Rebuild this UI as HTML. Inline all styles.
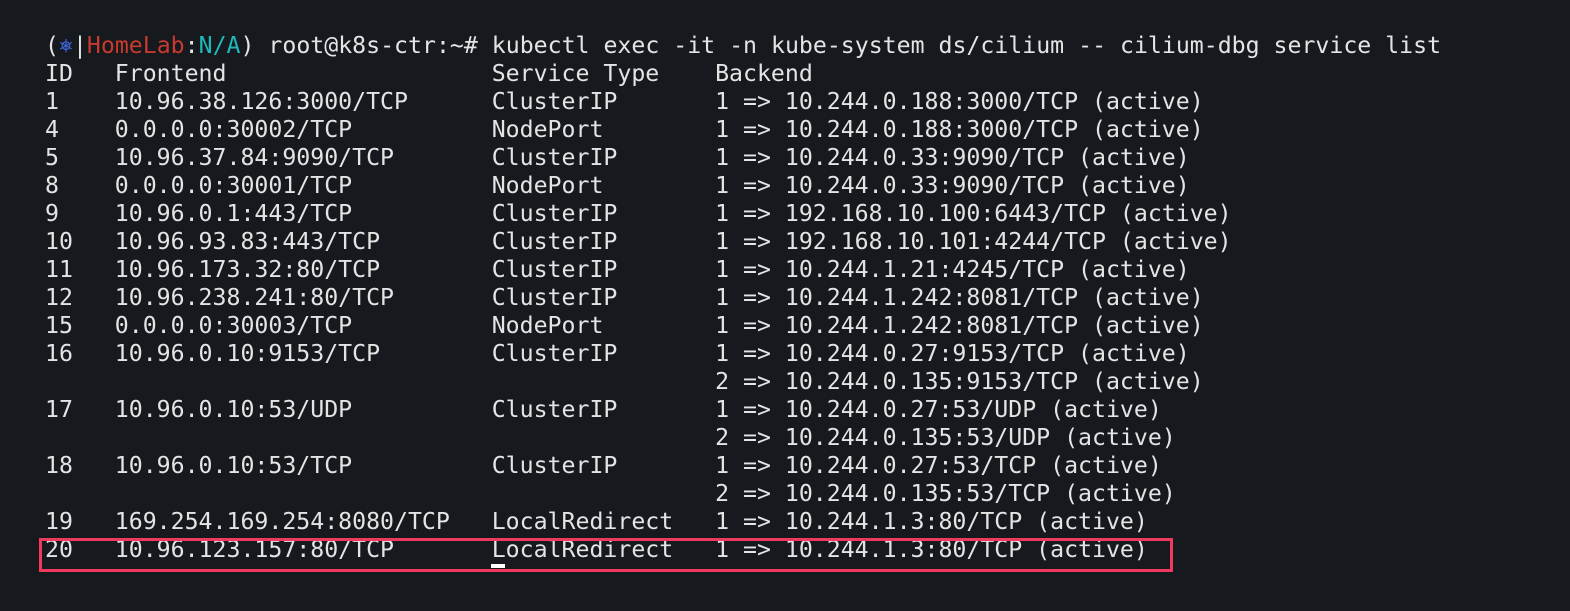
<!DOCTYPE html>
<html><head><meta charset="utf-8"><style>
html,body{margin:0;padding:0;background:#16191e;width:1570px;height:611px;overflow:hidden}
pre{position:absolute;left:45px;top:32px;margin:0;font-family:"DejaVu Sans Mono","Liberation Mono",monospace;font-size:23.2px;line-height:28px;color:#e4e4e4;white-space:pre}
.b{color:#3f63d8}.r{color:#c8392e}.c{color:#1fb8b8}
.box{position:absolute;left:39px;top:538px;width:1128px;height:28px;border:3px solid #f0395c}
.cur{position:absolute;left:491px;top:564px;width:14px;height:4px;background:#fff}
</style></head><body>
<pre>(<span class="b">⎈</span>|<span class="r">HomeLab</span>:<span class="c">N/A</span>) root@k8s-ctr:~# kubectl exec -it -n kube-system ds/cilium -- cilium-dbg service list
ID   Frontend                   Service Type    Backend
1    10.96.38.126:3000/TCP      ClusterIP       1 =&gt; 10.244.0.188:3000/TCP (active)
4    0.0.0.0:30002/TCP          NodePort        1 =&gt; 10.244.0.188:3000/TCP (active)
5    10.96.37.84:9090/TCP       ClusterIP       1 =&gt; 10.244.0.33:9090/TCP (active)
8    0.0.0.0:30001/TCP          NodePort        1 =&gt; 10.244.0.33:9090/TCP (active)
9    10.96.0.1:443/TCP          ClusterIP       1 =&gt; 192.168.10.100:6443/TCP (active)
10   10.96.93.83:443/TCP        ClusterIP       1 =&gt; 192.168.10.101:4244/TCP (active)
11   10.96.173.32:80/TCP        ClusterIP       1 =&gt; 10.244.1.21:4245/TCP (active)
12   10.96.238.241:80/TCP       ClusterIP       1 =&gt; 10.244.1.242:8081/TCP (active)
15   0.0.0.0:30003/TCP          NodePort        1 =&gt; 10.244.1.242:8081/TCP (active)
16   10.96.0.10:9153/TCP        ClusterIP       1 =&gt; 10.244.0.27:9153/TCP (active)
                                                2 =&gt; 10.244.0.135:9153/TCP (active)
17   10.96.0.10:53/UDP          ClusterIP       1 =&gt; 10.244.0.27:53/UDP (active)
                                                2 =&gt; 10.244.0.135:53/UDP (active)
18   10.96.0.10:53/TCP          ClusterIP       1 =&gt; 10.244.0.27:53/TCP (active)
                                                2 =&gt; 10.244.0.135:53/TCP (active)
19   169.254.169.254:8080/TCP   LocalRedirect   1 =&gt; 10.244.1.3:80/TCP (active)
20   10.96.123.157:80/TCP       LocalRedirect   1 =&gt; 10.244.1.3:80/TCP (active)</pre>
<div class="box"></div>
<div class="cur"></div>
</body></html>
